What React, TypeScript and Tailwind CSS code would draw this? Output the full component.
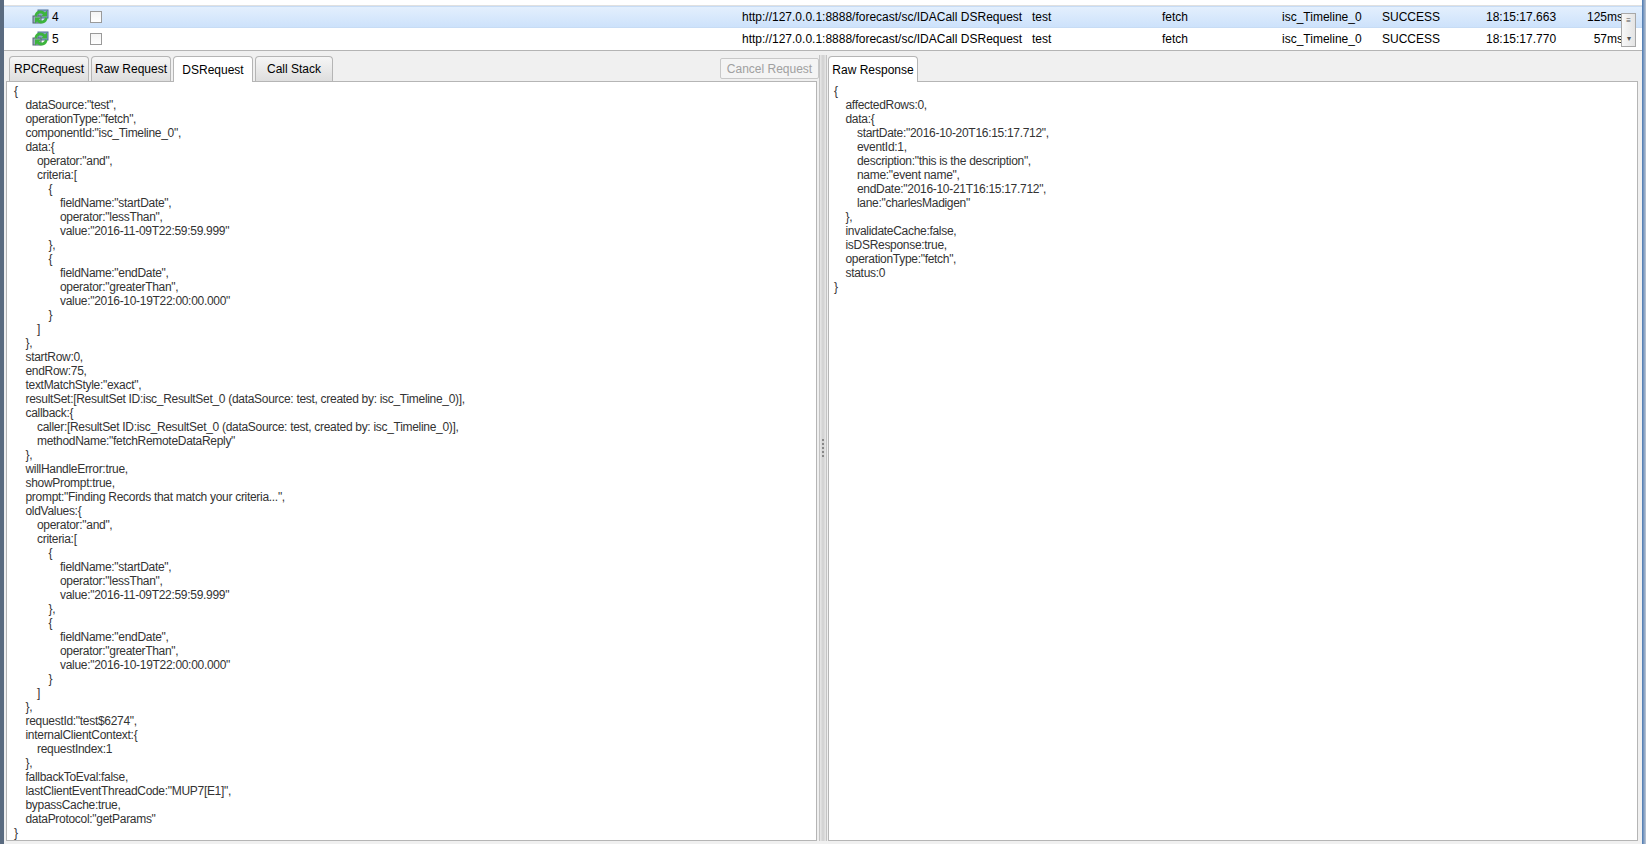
import React from "react";

const L = (s: string, lvl: number) => ({ s, lvl });
const left = [
  L("{",0),L('dataSource:"test",',1),L('operationType:"fetch",',1),L('componentId:"isc_Timeline_0",',1),L("data:{",1),
  L('operator:"and",',2),L("criteria:[",2),L("{",3),L('fieldName:"startDate",',4),L('operator:"lessThan",',4),L('value:"2016-11-09T22:59:59.999"',4),L("},",3),
  L("{",3),L('fieldName:"endDate",',4),L('operator:"greaterThan",',4),L('value:"2016-10-19T22:00:00.000"',4),L("}",3),L("]",2),L("},",1),
  L("startRow:0,",1),L("endRow:75,",1),L('textMatchStyle:"exact",',1),L("resultSet:[ResultSet ID:isc_ResultSet_0 (dataSource: test, created by: isc_Timeline_0)],",1),
  L("callback:{",1),L("caller:[ResultSet ID:isc_ResultSet_0 (dataSource: test, created by: isc_Timeline_0)],",2),L('methodName:"fetchRemoteDataReply"',2),L("},",1),
  L("willHandleError:true,",1),L("showPrompt:true,",1),L('prompt:"Finding Records that match your criteria...",',1),L("oldValues:{",1),
  L('operator:"and",',2),L("criteria:[",2),L("{",3),L('fieldName:"startDate",',4),L('operator:"lessThan",',4),L('value:"2016-11-09T22:59:59.999"',4),L("},",3),
  L("{",3),L('fieldName:"endDate",',4),L('operator:"greaterThan",',4),L('value:"2016-10-19T22:00:00.000"',4),L("}",3),L("]",2),L("},",1),
  L('requestId:"test$6274",',1),L("internalClientContext:{",1),L("requestIndex:1",2),L("},",1),
  L("fallbackToEval:false,",1),L('lastClientEventThreadCode:"MUP7[E1]",',1),L("bypassCache:true,",1),L('dataProtocol:"getParams"',1),L("}",0),
];
const right = [
  L("{",0),L("affectedRows:0,",1),L("data:{",1),L('startDate:"2016-10-20T16:15:17.712",',2),L("eventId:1,",2),L('description:"this is the description",',2),
  L('name:"event name",',2),L('endDate:"2016-10-21T16:15:17.712",',2),L('lane:"charlesMadigen"',2),L("},",1),L("invalidateCache:false,",1),
  L("isDSResponse:true,",1),L('operationType:"fetch",',1),L("status:0",1),L("}",0),
];

const Code = ({ lines, pl }: { lines: { s: string; lvl: number }[]; pl: string }) => (
  <div className={`pt-[2px] ${pl} text-[12px] leading-[14px] text-[#333] tracking-[-0.3px]`}>
    {lines.map((l, i) => (
      <div key={i} className="whitespace-pre" style={{ paddingLeft: l.lvl * 11.5 }}>{l.s}</div>
    ))}
  </div>
);

const Icon = () => (
  <svg width="18" height="16" viewBox="0 0 18 16">
    <rect x="6" y="1" width="10" height="8" fill="#8aa4c8" stroke="#50709a" />
    <rect x="1" y="7" width="8" height="7" fill="#9ab" stroke="#567" />
    <path d="M2.5 7 A6 6 0 0 1 13 3.5 L15 1.5 L15 7.5 L9 7.5 L11 5.5 A3.5 3.5 0 0 0 5 7.5 Z" fill="#3cb43c" />
    <path d="M15.5 9 A6 6 0 0 1 5 12.5 L3 14.5 L3 8.5 L9 8.5 L7 10.5 A3.5 3.5 0 0 0 13 8.5 Z" fill="#3cb43c" />
  </svg>
);

const Row = ({ n, sel, t, ms }: { n: string; sel?: boolean; t: string; ms: string }) => (
  <div className={`flex items-center h-[22px] text-[12px] text-black ${sel ? "bg-gradient-to-b from-[#e3effd] to-[#cde2fb] border-y border-[#c7dcf5]" : "bg-white"}`}>
    <div className="w-[28px]" />
    <Icon />
    <div className="w-[30px] pl-[2px]">{n}</div>
    <div className="w-[12px] h-[12px] border border-[#9a9a9a] bg-gradient-to-b from-[#f4f4f4] to-white ml-[10px]" />
    <div className="w-[640px]" />
    <div className="w-[290px]">http://127.0.0.1:8888/forecast/sc/IDACall DSRequest</div>
    <div className="w-[130px]">test</div>
    <div className="w-[120px]">fetch</div>
    <div className="w-[100px]">isc_Timeline_0</div>
    <div className="w-[104px]">SUCCESS</div>
    <div className="w-[100px]">{t}</div>
    <div className="w-[37px] text-right">{ms}</div>
  </div>
);

const Tab = ({ label, active, w }: { label: string; active?: boolean; w: string }) => (
  <div className={`${w} h-[25px] mr-[2px] rounded-t-[4px] border border-b-0 border-[#b5b5b5] flex items-center justify-center text-[12px] text-black ${active ? "bg-white h-[26px] -mb-px z-10" : "bg-gradient-to-b from-[#f6f6f6] to-[#dedede]"}`}>{label}</div>
);

export default function App() {
  return (
    <div className="w-[1646px] h-[844px] overflow-hidden bg-[#f0f0f0] flex" style={{ fontFamily: '"Liberation Sans", Arial, sans-serif' }}>
      <div className="w-[4px] bg-[#5a6b80]" />
      <div className="flex-1 flex flex-col">
        <div className="h-[51px] bg-white border-b-2 border-[#b4b4b4] relative">
          <div className="h-[6px] border-b border-[#e0e0e0]" />
          <Row n="4" sel t="18:15:17.663" ms="125ms" />
          <Row n="5" t="18:15:17.770" ms="57ms" />
          <div className="absolute right-[6px] top-[13px] w-[15px] h-[34px] border border-[#a8a8a8] bg-gradient-to-r from-[#f8f8f8] to-[#e4e4e4] flex flex-col items-center justify-between py-[3px] text-[8px] text-[#555] leading-none">
            <span>≡</span><span>▾</span>
          </div>
        </div>
        <div className="flex-1 flex pt-[4px] pb-[3px]">
          <div className="w-[815px] flex flex-col">
            <div className="flex items-end h-[26px] pl-[5px] relative">
              <Tab label="RPCRequest" w="w-[80px]" />
              <Tab label="Raw Request" w="w-[80px]" />
              <Tab label="DSRequest" active w="w-[80px]" />
              <Tab label="Call Stack" w="w-[78px]" />
              <div className="ml-auto mb-[2px] w-[99px] h-[21px] border border-[#c8c8c8] rounded-[2px] bg-[#f4f4f4] text-[12px] text-[#a0a0a0] flex items-center justify-center">Cancel Request</div>
            </div>
            <div className="flex-1 bg-white border border-[#b5b5b5] mx-[2px]">
              <Code lines={left} pl="pl-[7px]" />
            </div>
          </div>
          <div className="w-[8px] flex flex-col items-center justify-center gap-[2px] bg-gradient-to-r from-[#e8e8e8] via-[#d0d0d0] to-[#e8e8e8] border-x border-[#c4c4c4]">
            {[0, 1, 2, 3, 4].map(i => <div key={i} className="w-[2px] h-[2px] bg-[#888]" />)}
          </div>
          <div className="flex-1 flex flex-col">
            <div className="flex items-end h-[26px] pl-[1px]">
              <Tab label="Raw Response" active w="w-[90px]" />
            </div>
            <div className="flex-1 bg-white border border-[#b5b5b5] ml-[1px] mr-[4px]">
              <Code lines={right} pl="pl-[5px]" />
            </div>
          </div>
        </div>
      </div>
      <div className="w-[4px] bg-gradient-to-r from-[#4a78b0] to-[#c0c8d4]" />
    </div>
  );
}
